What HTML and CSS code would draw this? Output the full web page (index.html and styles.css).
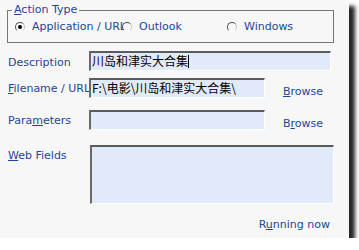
FILE: index.html
```html
<!DOCTYPE html>
<html lang="en">
<head>
  <meta charset="UTF-8" />
  <title>Action Properties</title>
  <link rel="stylesheet" href="styles.css">
</head>
<body>

  <div class="panel">
    <fieldset class="group">
      <legend><u>A</u>ction Type</legend>
      <div class="options">
        <label class="option"><span class="radio checked"></span>Application / URL</label>
        <label class="option"><span class="radio"></span>Outlook</label>
        <label class="option"><span class="radio"></span>Windows</label>
      </div>
    </fieldset>

    <div class="row row-desc">
      <span class="label">Description</span>
      <div class="field field-wide">川岛和津实大合集<span class="caret"></span></div>
    </div>

    <div class="row row-file">
      <span class="label"><u>F</u>ilename / URL</span>
      <div class="field field-short">F:\电影\川岛和津实大合集\</div>
      <a class="browse"><u>B</u>rowse</a>
    </div>

    <div class="row row-params">
      <span class="label">Para<u>m</u>eters</span>
      <div class="field field-short"></div>
      <a class="browse">B<u>r</u>owse</a>
    </div>

    <div class="row row-web">
      <span class="label label-top"><u>W</u>eb Fields</span>
      <div class="field field-area"></div>
    </div>

    <div class="footer">
      <a class="link">R<u>u</u>nning now</a>
    </div>
  </div>

</body>
</html>
```

FILE: styles.css
```css
body {
  margin: 0;
  background: #fff;
  font-family: 'DejaVu Sans', Verdana, sans-serif;
  font-size: 11px;
  color: #1e4597;
}
.panel {
  width: 349px;
  height: 238px;
  background: #f7f7f7;
  box-shadow: 6px 6px 4px rgba(0, 0, 0, 0.85);
  padding-top: 3px;
  box-sizing: border-box;
}
.group {
  margin: 0 0 0 7px;
  width: 327px;
  box-sizing: border-box;
  border: 1px solid #777;
  padding: 3px 4px 8px 4px;
}
.group legend {
  padding: 0 2px;
  line-height: 14px;
}
.options {
  display: grid;
  grid-template-columns: 107px 105px auto;
  margin-left: 3px;
  line-height: 14px;
}
.option {
  display: flex;
  align-items: center;
  white-space: nowrap;
}
.radio {
  flex-shrink: 0;
  width: 10px;
  height: 10px;
  box-sizing: border-box;
  border-radius: 50%;
  border: 1px solid;
  border-color: #505050 #c4c4c4 #fff #505050;
  background: #f7f7f7;
  margin-right: 7px;
  display: flex;
  align-items: center;
  justify-content: center;
}
.radio.checked::after {
  content: '';
  width: 4px;
  height: 4px;
  border-radius: 50%;
  background: #000;
}
.row {
  display: flex;
  align-items: center;
  padding-left: 8px;
}
.row-desc { margin-top: 8px; }
.row-file { margin-top: 6px; }
.row-params { margin-top: 11px; }
.row-web {
  margin-top: 15px;
  align-items: flex-start;
}
.label {
  flex-shrink: 0;
  width: 81px;
  white-space: nowrap;
  padding-top: 2px;
}
.label-top {
  padding-top: 4px;
}
.field {
  flex-shrink: 0;
  height: 20px;
  box-sizing: border-box;
  background: #e1eaf8;
  border-top: 2px solid #5c5c5c;
  border-left: 2px solid #6a6a6a;
  border-right: 1px solid #fff;
  border-bottom: 1px solid #fff;
  padding-left: 1px;
  color: #000;
  font-family: 'Noto Sans CJK SC', 'DejaVu Sans', sans-serif;
  font-size: 12px;
  line-height: 16px;
  white-space: nowrap;
  overflow: hidden;
}
.field-wide { width: 242px; }
.field-short { width: 176px; }
.field-area {
  width: 244px;
  height: 59px;
  margin-left: 1px;
}
.caret {
  display: inline-block;
  width: 1px;
  height: 13px;
  background: #000;
  vertical-align: -2px;
}
.browse {
  margin-left: 18px;
  padding-top: 8px;
}
.footer {
  margin-top: 14px;
  padding-right: 19px;
  text-align: right;
  line-height: 13px;
}
```
